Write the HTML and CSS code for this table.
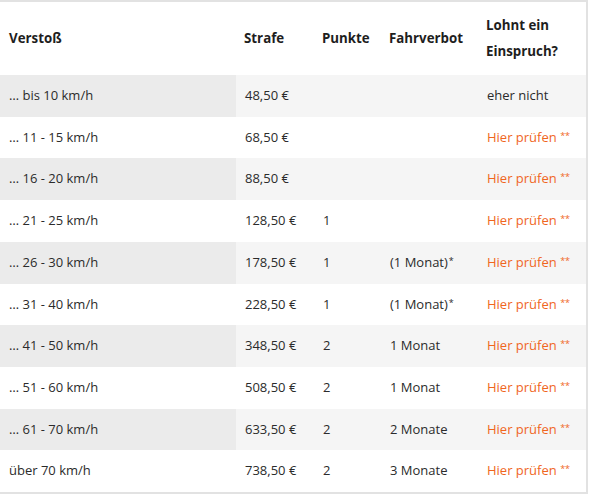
FILE: index.html
```
<!DOCTYPE html>
<html lang="de">
<head>
<meta charset="utf-8">
<link rel="stylesheet" href="styles.css">
</head>
<body>
<div class="wrap">
<table class="fines">
<colgroup>
<col class="c1"><col class="c2"><col class="c3"><col class="c4"><col class="c5">
</colgroup>
<thead>
<tr><th>Verstoß</th><th>Strafe</th><th>Punkte</th><th>Fahrverbot</th><th>Lohnt ein Einspruch?</th></tr>
</thead>
<tbody>
<tr><td>… bis 10 km/h</td><td>48,50 €</td><td></td><td></td><td>eher nicht</td></tr>
<tr><td>… 11 - 15 km/h</td><td>68,50 €</td><td></td><td></td><td><a class="check">Hier prüfen <sup>**</sup></a></td></tr>
<tr><td>… 16 - 20 km/h</td><td>88,50 €</td><td></td><td></td><td><a class="check">Hier prüfen <sup>**</sup></a></td></tr>
<tr><td>… 21 - 25 km/h</td><td>128,50 €</td><td>1</td><td></td><td><a class="check">Hier prüfen <sup>**</sup></a></td></tr>
<tr><td>… 26 - 30 km/h</td><td>178,50 €</td><td>1</td><td>(1 Monat)<sup class="note">*</sup></td><td><a class="check">Hier prüfen <sup>**</sup></a></td></tr>
<tr><td>… 31 - 40 km/h</td><td>228,50 €</td><td>1</td><td>(1 Monat)<sup class="note">*</sup></td><td><a class="check">Hier prüfen <sup>**</sup></a></td></tr>
<tr><td>… 41 - 50 km/h</td><td>348,50 €</td><td>2</td><td>1 Monat</td><td><a class="check">Hier prüfen <sup>**</sup></a></td></tr>
<tr><td>… 51 - 60 km/h</td><td>508,50 €</td><td>2</td><td>1 Monat</td><td><a class="check">Hier prüfen <sup>**</sup></a></td></tr>
<tr><td>… 61 - 70 km/h</td><td>633,50 €</td><td>2</td><td>2 Monate</td><td><a class="check">Hier prüfen <sup>**</sup></a></td></tr>
<tr><td>über 70 km/h</td><td>738,50 €</td><td>2</td><td>3 Monate</td><td><a class="check">Hier prüfen <sup>**</sup></a></td></tr>
</tbody>
</table>
</div>
</body>
</html>
```
FILE: styles.css
```
html, body {
  margin: 0;
  padding: 0;
  background: #fff;
}
body {
  font-family: "Open Sans", "Noto Sans", sans-serif;
  font-size: 13px;
  color: #2b2b2b;
}
.wrap {
  width: 586px;
  border-top: 2px solid #e2e2e2;
  border-right: 2px solid #e2e2e2;
  border-bottom: 2px solid #e2e2e2;
}
.fines {
  width: 100%;
  border-collapse: collapse;
  table-layout: fixed;
}
.c1 { width: 236px; }
.c2 { width: 78px; }
.c3 { width: 67px; }
.c4 { width: 97px; }
.fines th {
  text-align: left;
  font-weight: 700;
  font-size: 13.3px;
  color: #1e1e1e;
  padding: 10px 8px 11px;
  line-height: 26px;
  vertical-align: middle;
}
.fines td {
  padding: 8px 8px 8px 9px;
  line-height: 25.7px;
  white-space: nowrap;
  vertical-align: middle;
}
.fines th:first-child, .fines td:first-child {
  padding-left: 9px;
}
.fines tbody tr:nth-child(odd) td {
  background: #f5f5f5;
}
.fines tbody tr:nth-child(odd) td:first-child {
  background: #ebebeb;
}
.check {
  color: #f0661e;
  text-decoration: none;
}
.check sup {
  font-size: 9px;
  line-height: 0;
  vertical-align: 3px;
}
.note {
  font-size: 9px;
  line-height: 0;
  vertical-align: 3px;
  margin-left: 1px;
}
```
